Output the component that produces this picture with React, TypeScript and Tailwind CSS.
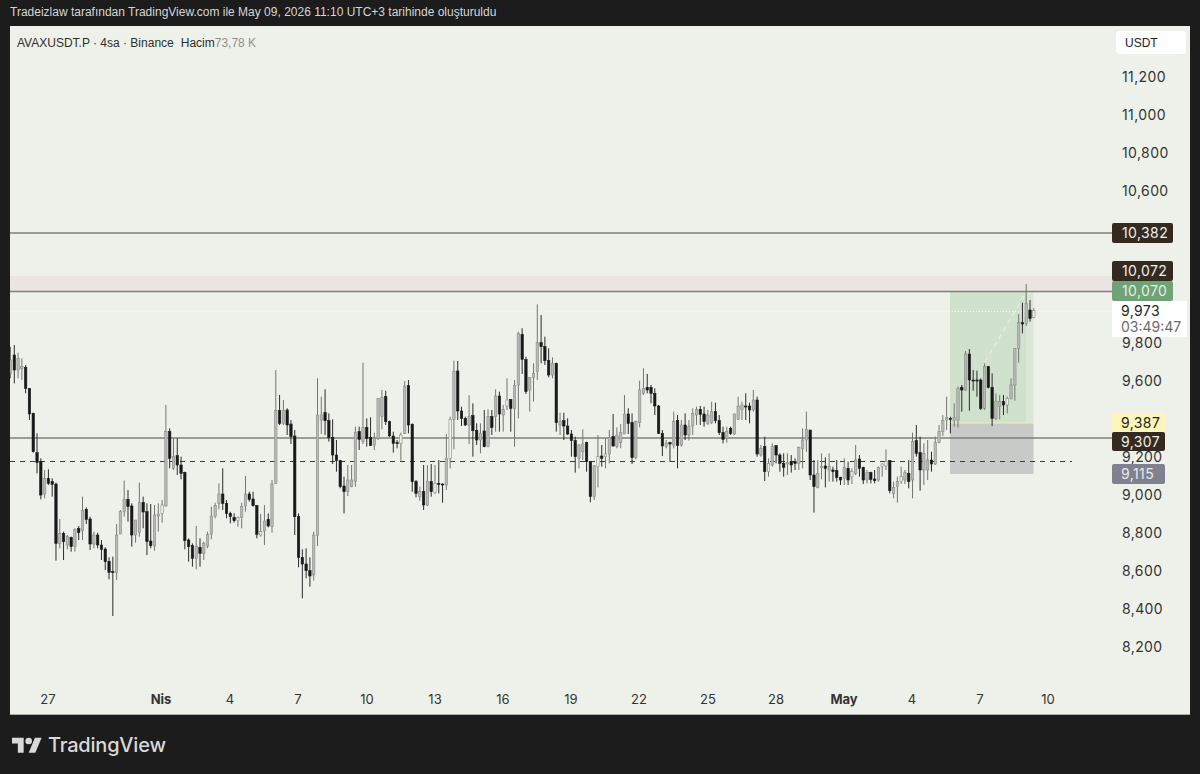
type Candle = [number, number, number, number, number]

// wick top, body top, body bottom, wick bottom, kind (0 light, 1 dark, 2 hollow)
// values are read off 3x crops, so y = base + v / 3
const first: Candle[] = [
  [20, 60, 100, 115, 0], [15, 45, 90, 130, 1], [38, 55, 90, 115, 0], [55, 80, 85, 120, 0], [75, 82, 145, 160, 1],
  [145, 145, 222, 240, 1], [218, 220, 335, 338, 1], [280, 338, 368, 400, 1], [355, 365, 465, 478, 1], [390, 415, 462, 475, 0],
  [388, 415, 430, 435, 1], [415, 425, 433, 470, 1], [428, 432, 610, 662, 1], [537, 580, 610, 625, 0], [575, 580, 605, 660, 1],
  [585, 590, 615, 628, 0], [590, 592, 620, 635, 1], [565, 568, 620, 635, 0], [558, 566, 578, 600, 1], [470, 512, 572, 600, 0],
  [502, 508, 538, 552, 1], [530, 537, 612, 630, 1], [575, 585, 612, 625, 0], [578, 585, 615, 625, 1], [600, 615, 628, 660, 1],
  [622, 627, 665, 690, 1], [652, 664, 697, 718, 1], [650, 695, 698, 828, 1], [552, 585, 697, 720, 0], [510, 515, 582, 582, 0],
  [422, 478, 515, 530, 0], [450, 478, 500, 545, 1], [490, 498, 585, 620, 1], [540, 540, 585, 608, 0], [428, 488, 578, 590, 0],
  [470, 487, 516, 565, 1], [490, 515, 605, 645, 1], [492, 603, 617, 625, 1], [495, 525, 618, 632, 0], [490, 522, 528, 575, 0],
  [480, 495, 520, 548, 2], [195, 275, 498, 500, 0], [265, 275, 355, 385, 1], [295, 350, 385, 390, 0], [295, 347, 375, 405, 1],
  [350, 375, 400, 418, 1], [395, 397, 602, 628, 1], [595, 600, 620, 665, 1], [610, 617, 655, 680, 1], [558, 620, 655, 688, 0],
  [595, 622, 640, 680, 1], [605, 610, 640, 660, 0], [575, 583, 618, 625, 0], [500, 528, 582, 598, 0], [488, 497, 528, 535, 0],
  [430, 462, 490, 508, 0], [385, 462, 490, 510, 1], [480, 490, 520, 535, 1], [515, 520, 530, 550, 1], [520, 532, 542, 548, 1],
  [530, 533, 542, 560, 2], [488, 500, 532, 565, 0], [408, 462, 498, 515, 0], [455, 462, 478, 485, 1], [455, 477, 497, 500, 1],
  [495, 497, 583, 595, 1], [522, 575, 585, 590, 2], [495, 543, 573, 615, 0], [520, 538, 558, 562, 1], [420, 432, 560, 578, 0],
  [90, 212, 430, 432, 0], [165, 212, 250, 255, 1], [180, 212, 250, 255, 0], [205, 210, 255, 285, 1], [240, 252, 290, 312, 1],
  [270, 288, 530, 585, 1], [520, 530, 652, 682, 1], [628, 652, 672, 775, 1], [625, 672, 692, 715, 1], [652, 692, 708, 740, 1],
  [575, 585, 705, 722, 0], [115, 225, 587, 618, 0], [170, 225, 240, 282, 0], [148, 218, 242, 285, 1], [220, 242, 292, 305, 1],
  [238, 292, 345, 372, 1], [300, 345, 362, 395, 1], [360, 362, 440, 445, 1],
]

const second: Candle[] = [
  [530, 558, 575, 640, 1], [495, 540, 575, 588, 0], [495, 540, 560, 562, 0], [380, 398, 545, 560, 0], [380, 395, 418, 450, 1],
  [188, 382, 425, 432, 0], [355, 382, 415, 440, 1], [352, 412, 436, 438, 1], [398, 415, 435, 450, 0], [295, 295, 415, 420, 0],
  [270, 292, 350, 388, 0], [272, 290, 365, 375, 1], [362, 365, 408, 410, 1], [395, 408, 430, 458, 1], [420, 428, 430, 445, 1],
  [398, 405, 430, 482, 2], [243, 258, 400, 402, 0], [240, 257, 375, 400, 1], [370, 373, 545, 575, 1], [540, 545, 580, 592, 1],
  [560, 575, 590, 602, 0], [495, 575, 615, 630, 1], [495, 545, 615, 618, 0], [492, 545, 575, 590, 1], [495, 550, 578, 582, 2],
  [480, 550, 552, 580, 1], [550, 552, 554, 608, 1], [402, 475, 555, 570, 0], [350, 358, 475, 505, 2], [182, 215, 358, 448, 0],
  [183, 213, 333, 360, 1], [320, 333, 355, 378, 1], [350, 355, 375, 378, 1], [285, 350, 375, 432, 0], [310, 347, 392, 470, 1],
  [370, 392, 420, 435, 1], [370, 400, 420, 460, 0], [330, 393, 440, 442, 1], [328, 350, 440, 442, 0], [330, 350, 382, 405, 1],
  [268, 288, 350, 395, 0], [275, 288, 342, 395, 1], [315, 328, 345, 395, 0], [235, 300, 318, 330, 2], [298, 298, 325, 395, 1],
  [240, 256, 325, 440, 0], [95, 100, 255, 355, 0], [85, 103, 178, 222, 1], [170, 178, 275, 282, 1], [232, 233, 270, 335, 0],
  [190, 220, 232, 305, 0], [13, 128, 215, 240, 0], [45, 128, 140, 190, 1], [110, 140, 182, 195, 1], [145, 182, 225, 232, 1],
  [172, 190, 225, 235, 0], [188, 190, 368, 395, 1], [338, 365, 375, 405, 0], [338, 362, 378, 420, 1], [355, 378, 402, 405, 1],
  [390, 402, 422, 470, 1], [410, 422, 470, 518, 1], [432, 435, 475, 505, 0], [388, 432, 455, 480, 0], [425, 428, 485, 515, 1],
  [483, 485, 590, 607, 1], [495, 498, 590, 600, 0], [405, 470, 500, 562, 2], [435, 468, 475, 500, 1], [415, 462, 470, 505, 2],
  [390, 412, 462, 490, 0], [342, 410, 438, 440, 1], [382, 405, 440, 445, 0], [372, 398, 428, 445, 0], [285, 342, 402, 402, 0],
  [325, 342, 370, 402, 1], [340, 368, 473, 492, 1], [362, 365, 473, 478, 0], [242, 270, 368, 382, 0], [205, 265, 280, 285, 0],
  [222, 262, 270, 280, 1], [255, 262, 280, 310, 1], [265, 280, 318, 345, 1], [315, 318, 400, 402, 1], [390, 400, 438, 468, 1],
  [420, 430, 440, 445, 0], [425, 428, 432, 485, 1], [335, 365, 435, 445, 0], [345, 362, 437, 505, 1],
]

const third: Candle[] = [
  [420, 435, 495, 500, 0], [400, 435, 465, 480, 1], [420, 440, 465, 482, 0], [385, 400, 438, 465, 0], [380, 388, 405, 435, 0],
  [378, 388, 403, 435, 1], [380, 402, 425, 440, 1], [390, 405, 430, 435, 0], [365, 395, 428, 432, 0], [368, 395, 422, 430, 1],
  [405, 422, 458, 465, 1], [440, 458, 478, 490, 1], [440, 455, 475, 488, 0], [440, 445, 460, 465, 1], [400, 402, 462, 465, 0],
  [350, 378, 418, 420, 0], [365, 375, 388, 420, 0], [340, 378, 380, 420, 1], [368, 378, 390, 430, 1], [330, 360, 390, 395, 0],
  [350, 360, 522, 530, 1], [495, 505, 525, 530, 0], [470, 500, 575, 603, 1], [535, 550, 575, 590, 2], [490, 500, 555, 560, 0],
  [495, 497, 525, 550, 1], [520, 525, 550, 575, 1], [520, 550, 562, 590, 1], [520, 548, 552, 585, 0], [525, 545, 555, 578, 1],
  [535, 545, 550, 570, 1], [500, 502, 550, 570, 0], [445, 480, 505, 565, 0], [395, 448, 480, 515, 0], [450, 450, 585, 600, 1],
  [540, 585, 620, 698, 1], [540, 580, 622, 625, 0], [520, 560, 562, 598, 0], [532, 558, 565, 622, 1], [520, 560, 570, 605, 0],
  [560, 570, 575, 605, 1], [540, 572, 592, 605, 1], [590, 592, 600, 615, 1], [535, 562, 595, 615, 0], [545, 565, 600, 615, 1],
  [565, 575, 590, 612, 2], [495, 540, 580, 585, 0], [525, 537, 565, 590, 1], [560, 562, 600, 612, 1], [570, 578, 600, 610, 0],
  [575, 578, 598, 610, 1], [570, 597, 602, 610, 1], [560, 562, 600, 605, 0], [550, 552, 560, 590, 2], [508, 545, 558, 570, 2],
  [540, 542, 632, 640, 1], [605, 622, 640, 655, 0], [590, 605, 620, 668, 0], [560, 590, 605, 612, 2], [570, 578, 600, 612, 0],
  [540, 580, 605, 625, 1], [458, 485, 600, 655, 0], [435, 482, 520, 530, 1], [470, 518, 570, 632, 1], [490, 520, 570, 615, 0],
  [480, 540, 570, 600, 0], [515, 540, 552, 575, 1], [470, 488, 552, 555, 0], [435, 455, 488, 490, 0], [405, 422, 455, 468, 0],
  [350, 412, 420, 450, 0], [410, 415, 418, 460, 1], [370, 412, 422, 440, 0], [320, 325, 420, 442, 0], [315, 322, 330, 395, 1],
  [213, 222, 330, 332, 0], [207, 222, 300, 392, 1], [270, 300, 302, 332, 1], [272, 300, 302, 350, 1], [295, 300, 385, 390, 1],
  [250, 260, 385, 390, 0], [258, 260, 322, 325, 1], [280, 322, 415, 438, 1], [340, 365, 415, 420, 0], [345, 365, 380, 418, 0],
  [345, 365, 375, 405, 1], [350, 355, 375, 400, 2], [295, 315, 355, 358, 0], [205, 205, 315, 362, 0], [102, 128, 205, 248, 0],
  [68, 128, 132, 160, 1], [12, 70, 130, 138, 0], [60, 90, 115, 125, 1], [85, 92, 112, 115, 2],
]

const segments: { base: number; start: number; items: Candle[] }[] = [
  { base: 340, start: 0, items: first },
  { base: 300, start: 88, items: second },
  { base: 280, start: 177, items: third },
]

const prices = ["11,200", "11,000", "10,800", "10,600", "10,400", "10,200", "10,000", "9,800", "9,600", "9,400", "9,200", "9,000", "8,800", "8,600", "8,400", "8,200"]

const ticks = [
  { label: "27", className: "ml-[38px]" },
  { label: "Nis", className: "ml-[113px] font-bold" },
  { label: "4", className: "ml-[69px]" },
  { label: "7", className: "ml-[68px]" },
  { label: "10", className: "ml-[69px]" },
  { label: "13", className: "ml-[68px]" },
  { label: "16", className: "ml-[68px]" },
  { label: "19", className: "ml-[68px]" },
  { label: "22", className: "ml-[68px]" },
  { label: "25", className: "ml-[69px]" },
  { label: "28", className: "ml-[68px]" },
  { label: "May", className: "ml-[68px] font-bold" },
  { label: "4", className: "ml-[68px]" },
  { label: "7", className: "ml-[68px]" },
  { label: "10", className: "ml-[68px]" },
]

function Candles() {
  return (
    <>
      {segments.map((seg) =>
        seg.items.map(([high, top, bottom, low, kind], i) => {
          const x = 10.5 + (seg.start + i) * 3.79
          const y = (v: number) => seg.base + v / 3
          const wick = kind === 1 ? "#2b2b2b" : "#74756f"
          const fill = kind === 1 ? "#191919" : kind === 2 ? "#eef1e9" : "#b9b9b7"
          const stroke = kind === 1 ? "#191919" : "#8a8b86"
          return (
            <g key={seg.start + i}>
              <line x1={x} x2={x} y1={y(high)} y2={y(low)} stroke={wick} strokeWidth={1} />
              <rect
                x={x - 1.2}
                y={y(top)}
                width={2.4}
                height={Math.max(y(bottom) - y(top), 1)}
                fill={fill}
                stroke={stroke}
                strokeWidth={0.6}
              />
            </g>
          )
        })
      )}
    </>
  )
}

function Chart() {
  return (
    <svg className="block h-[660px] w-[1102px]" viewBox="10 26 1102 660">
      {/* zones */}
      <rect x={10} y={276} width={1102} height={15} fill="#eae5e0" />
      <rect x={950} y={292} width={76} height={131} fill="#d0e1cd" />
      <rect x={1026} y={292} width={7.5} height={131} fill="#dae7d7" />
      <rect x={950} y={423} width={83.5} height={51} fill="#c8cac7" />
      <line x1={950} x2={1033.5} y1={423} y2={423} stroke="#f3efbf" strokeWidth={1} />

      {/* levels */}
      <line x1={10} x2={1112} y1={233} y2={233} stroke="#7f8174" strokeWidth={1.5} />
      <line x1={10} x2={1112} y1={291.5} y2={291.5} stroke="#7f8174" strokeWidth={1.5} />
      <line x1={10} x2={1112} y1={438} y2={438} stroke="#7f8174" strokeWidth={1.5} />
      <line x1={10} x2={1072} y1={461.5} y2={461.5} stroke="#3a3a3a" strokeWidth={1} strokeDasharray="5 5" />
      <line x1={10} x2={1112} y1={311.5} y2={311.5} stroke="#fafaf5" strokeWidth={1} strokeDasharray="1 2" />
      <line x1={985} x2={1024} y1={362} y2={296} stroke="#eef0d6" strokeWidth={1.2} strokeDasharray="5 4" />

      <Candles />
    </svg>
  )
}

function Logo() {
  return (
    <svg className="mt-[2px] h-[24px] w-[30px]" viewBox="0 0 36 28" fill="#d9d9d9">
      <path d="M14 22H7V11H0V4h14v18zM28 22h-8l7.5-18h8L28 22z" />
      <circle cx="20" cy="8" r="4" />
    </svg>
  )
}

export default function App() {
  return (
    <div className="flex h-[774px] w-[1200px] flex-col overflow-hidden bg-[#1c1c1c] font-['Inter',sans-serif]">
      <div className="flex h-[26px] items-center pb-[2px] pl-[10px] font-['Liberation_Sans',sans-serif] text-[12px] text-[#d6d6d6]">
        Tradeizlaw tarafından TradingView.com ile May 09, 2026 11:10 UTC+3 tarihinde oluşturuldu
      </div>

      <div className="mx-[10px] flex h-[689px] border-b border-[#a9aaa4] bg-[#eef1e9]">
        <div className="relative w-[1102px]">
          <Chart />
          <div className="absolute left-[7px] top-[8px] flex font-['Liberation_Sans',sans-serif] text-[12px] text-[#2e2e2e]">
            <span>AVAXUSDT.P · 4sa · Binance</span>
            <span className="ml-[7px]">Hacim</span>
            <span className="text-[#8f908c]">73,78 K</span>
          </div>
          <div className="flex h-[28px] items-center pb-[1px] text-[13px] text-[#333333]">
            {ticks.map((t, i) => (
              <div key={i} className={`flex w-0 justify-center ${t.className}`}>
                {t.label}
              </div>
            ))}
          </div>
        </div>

        <div className="relative w-[78px] text-[14px] tracking-[0.4px] text-[#333333]">
          <div className="ml-[4px] mt-[5px] flex h-[23px] w-[70px] items-center rounded bg-white pl-[9px] font-['Liberation_Sans',sans-serif] text-[12px] tracking-normal text-[#222222]">
            USDT
          </div>
          <div className="mt-[4px] flex flex-col pl-[10px]">
            {prices.map((p) => (
              <div key={p} className="flex h-[38px] items-center pb-[1px]">
                {p}
              </div>
            ))}
          </div>

          <div className="absolute left-0 top-[197px] flex h-[20px] w-[61px] items-center rounded-[2px] bg-[#352a20] pb-[2px] pl-[10px] text-[#eeeeea]">
            10,382
          </div>
          <div className="absolute left-0 top-[235px] flex h-[20px] w-[61px] items-center rounded-[2px] bg-[#352a20] pb-[2px] pl-[10px] text-[#eeeeea]">
            10,072
          </div>
          <div className="absolute left-0 top-[255px] flex h-[20px] w-[61px] items-center rounded-[2px] bg-[#6fa276] pb-[2px] pl-[10px] text-[#e6efe4]">
            10,070
          </div>
          <div className="absolute left-0 top-[275px] flex h-[36px] w-[75px] flex-col justify-center bg-white pl-[9px] leading-[16px]">
            <span className="text-[#222222]">9,973</span>
            <span className="tracking-normal text-[#6b6b6b]">03:49:47</span>
          </div>
          <div className="absolute left-0 top-[387px] flex h-[19px] w-[53px] items-center bg-[#fcf6bb] pb-[1px] pl-[9px] text-[#222222]">
            9,387
          </div>
          <div className="absolute left-0 top-[406px] flex h-[19px] w-[53px] items-center rounded-[2px] bg-[#352a20] pb-[1px] pl-[9px] text-[#eeeeea]">
            9,307
          </div>
          <div className="absolute left-0 top-[438px] flex h-[20px] w-[53px] items-center rounded-[2px] bg-[#7f8190] pb-[1px] pl-[9px] text-[#e9e9ec]">
            9,115
          </div>
        </div>
      </div>

      <div className="flex h-[59px] items-center gap-[6px] pl-[12px]">
        <Logo />
        <span className="text-[20px] font-medium tracking-[-0.2px] text-[#d9d9d9]">TradingView</span>
      </div>
    </div>
  )
}
